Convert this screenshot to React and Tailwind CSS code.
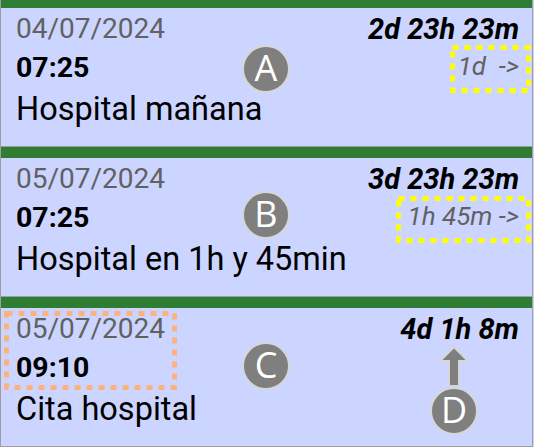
import React from "react";

function DotBox({ left, top, w, h, color }) {
  return (
    <svg
      className="absolute"
      width={w}
      height={h}
      viewBox={`0 0 ${w} ${h}`}
      style={{ left, top }}
    >
      <rect
        x="2.5"
        y="2.5"
        width={w - 5}
        height={h - 5}
        fill="none"
        stroke={color}
        strokeWidth="5"
        strokeDasharray="6 6"
      />
    </svg>
  );
}

function Badge({ letter, left, top }) {
  return (
    <div
      className="absolute flex h-[48px] w-[48px] items-center justify-center rounded-full border-2 border-[#d6d6d6] bg-[#7f7f7f] text-[36px] leading-none text-white"
      style={{ left, top, fontFamily: '"Open Sans", sans-serif' }}
    >
      <span className="-mt-[2px]">{letter}</span>
    </div>
  );
}

function Card({ date, time, title, countdown, sub, children, first }) {
  return (
    <div
      className={
        first
          ? "relative -mt-[3px] h-[150px] border-b border-[#9e9e9e] bg-[#ccd5ff]"
          : "relative h-[150px] border-b border-[#9e9e9e] bg-[#ccd5ff]"
      }
    >
      <div className="h-[11px] bg-[#2e7d32]" />
      <div className="flex justify-between pl-[15px] pr-[13px] pt-[3px]">
        <div className="flex-none">
          <div className="text-[28px] leading-[36px] text-[#616161]">{date}</div>
          <div className="text-[28.5px] font-bold leading-[42px] text-black">{time}</div>
          <div className="whitespace-nowrap text-[32.5px] leading-[40px] text-black">{title}</div>
        </div>
        <div className="flex flex-col items-end">
          <div className="whitespace-nowrap text-[29px] font-bold italic leading-[36px] text-black">
            {countdown}
          </div>
          {sub && (
            <div className="whitespace-nowrap text-[26px] italic leading-[39px] text-[#616161]">
              {sub}
            </div>
          )}
        </div>
      </div>
      {children}
    </div>
  );
}

export default function App() {
  return (
    <div
      className="h-[447px] w-[534px] overflow-hidden bg-[#ccd5ff]"
      style={{ fontFamily: "Roboto, sans-serif" }}
    >
      <div className="w-[533px] border-x border-[#9e9e9e]">
        <Card
          first
          date="04/07/2024"
          time="07:25"
          title="Hospital mañana"
          countdown="2d 23h 23m"
          sub={"1d\u00a0 ->"}
        >
          <Badge letter="A" left={241} top={48} />
          <DotBox left={449} top={48} w={81} h={48} color="#ffff00" />
        </Card>
        <Card
          date="05/07/2024"
          time="07:25"
          title="Hospital en 1h y 45min"
          countdown="3d 23h 23m"
          sub="1h 45m ->"
        >
          <Badge letter="B" left={241} top={44} />
          <DotBox left={395} top={49} w={135} h={47} color="#ffff00" />
        </Card>
        <Card
          date="05/07/2024"
          time="09:10"
          title="Cita hospital"
          countdown="4d 1h 8m"
        >
          <Badge letter="C" left={241} top={45} />
          <DotBox left={3} top={14} w={173} h={79} color="#fbb27f" />
          <svg
            className="absolute"
            width="30"
            height="40"
            viewBox="0 0 30 40"
            style={{ left: 438, top: 49 }}
          >
            <polygon
              points="15,1 29,15 20,15 20,40 10,40 10,15 1,15"
              fill="#7f7f7f"
              stroke="#d6d6d6"
              strokeWidth="2"
            />
          </svg>
          <Badge letter="D" left={429} top={90} />
        </Card>
      </div>
    </div>
  );
}
